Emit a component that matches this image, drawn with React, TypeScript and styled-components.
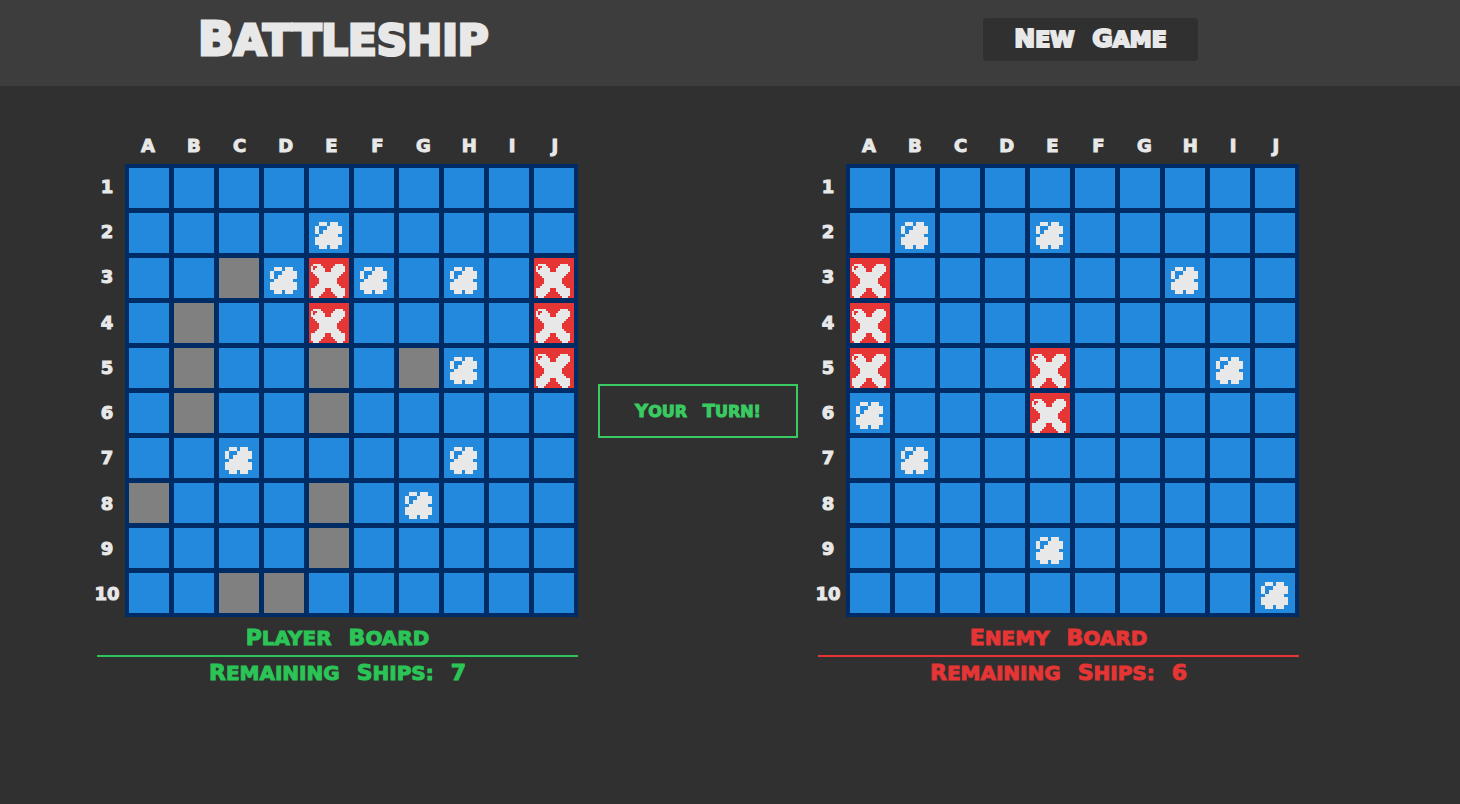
import React from "react";
import styled, { createGlobalStyle } from "styled-components";

const GlobalStyle = createGlobalStyle`
  * { box-sizing: border-box; }
  body {
    margin: 0;
    background: #303030;
    color: #e8e8e8;
    font-family: "DejaVu Sans", sans-serif;
    font-weight: 700;
  }
`;

const Header = styled.header`
  display: flex;
  align-items: center;
  justify-content: space-between;
  height: 86px;
  padding: 0 262px 7px 198px;
  background: #3d3d3d;
`;

const Title = styled.h1`
  margin: 0;
  font-size: 42px;
  line-height: 46px;
  white-space: nowrap;
  -webkit-text-stroke: 3px currentColor;
`;

const NewGame = styled.button`
  width: 215px;
  height: 43px;
  padding: 0;
  border: 0;
  border-radius: 4px;
  background: #303030;
  color: inherit;
  font: inherit;
  font-size: 22px;
  line-height: 28px;
  white-space: nowrap;
  cursor: pointer;
  -webkit-text-stroke: 2px currentColor;
`;

const Word = styled.span<{ $cap: number }>`
  display: inline-block;
  text-transform: uppercase;
  &::first-letter { font-size: ${(p) => p.$cap}px; }
  & + & { margin-left: 10px; }
`;

const Main = styled.main`
  display: flex;
  align-items: center;
  justify-content: center;
  gap: 20px;
  padding: 48px 64px 48px 0;
`;

const BoardBox = styled.section`
  display: grid;
  grid-template-columns: 28px auto;
`;

const Letters = styled.div`
  grid-column: 2;
  display: flex;
  justify-content: space-around;
  padding-bottom: 6px;
  font-size: 18px;
  line-height: 24px;
`;

const Letter = styled.span<{ $narrow: boolean }>`
  display: flex;
  justify-content: center;
  width: ${(p) => (p.$narrow ? 8 : 14)}px;
  -webkit-text-stroke: 1px currentColor;
`;

const Numbers = styled.div`
  display: flex;
  flex-direction: column;
  align-items: center;
  justify-content: space-around;
  width: 20px;
  font-size: 18px;
  line-height: 24px;
  -webkit-text-stroke: 1px currentColor;
`;

const Sea = styled.div`
  display: grid;
  grid-template-columns: repeat(10, 40px);
  grid-auto-rows: 40px;
  gap: 5px;
  padding: 4px;
  background: #002c66;
`;

const cellColors: Record<string, string> = {
  ".": "#2389dc",
  o: "#2389dc",
  s: "#808080",
  x: "#e53535",
};

const Cell = styled.div<{ $kind: string }>`
  display: flex;
  align-items: center;
  justify-content: center;
  padding: 0;
  border: 0;
  background: ${(p) => cellColors[p.$kind]};
`;

const Splash = styled.svg`
  width: 27px;
  height: 27px;
  margin-top: 5px;
  margin-right: 1px;
`;

const Hit = styled.svg`
  width: 34px;
  height: 34px;
  margin-top: 6px;
  margin-right: 2px;
`;

const Caption = styled.div<{ $color: string }>`
  grid-column: 1 / -1;
  color: ${(p) => p.$color};
  font-size: 20px;
  text-align: center;
  white-space: nowrap;
  -webkit-text-stroke: 1px currentColor;
`;

const BoardName = styled.h2`
  margin: 0;
  padding-top: 4px;
  border-bottom: 2px solid currentColor;
  font-size: 20px;
  line-height: 34px;
`;

const Remaining = styled.p`
  margin: 0;
  padding-top: 2px;
  line-height: 28px;
`;

const Turn = styled.div`
  flex: none;
  width: 200px;
  padding: 13px 0 12px;
  border: 2px solid #39cb62;
  color: #39cb62;
  font-size: 16px;
  line-height: 24px;
  text-align: center;
  white-space: nowrap;
  -webkit-text-stroke: 1px currentColor;
`;

const splashPixels = [
  ".##.##.",
  "#..####",
  "#.#####",
  ".#####.",
  "#######",
  "#######",
  ".##.##.",
];

const hitPixels = [
  ".####.......####.",
  "#..###.....######",
  "#.#####...#######",
  "#######...#######",
  ".###############.",
  "..#############..",
  "...###########...",
  "....#########....",
  "....#########....",
  "....#########....",
  "...###########...",
  "..#############..",
  "#######...#######",
  "#######...#######",
  "######.....######",
  "#####.......#####",
  ".###.........###.",
];

function Pixels({ rows }: { rows: string[] }) {
  return (
    <>
      {rows.flatMap((row, y) =>
        [...row].map((c, x) =>
          c === "#" ? <rect key={`${x}-${y}`} x={x} y={y} width="1" height="1" /> : null
        )
      )}
    </>
  );
}

function Mark({ kind }: { kind: string }) {
  if (kind === "o")
    return (
      <Splash viewBox="0 0 7 7" fill="#e8e8e8" shapeRendering="crispEdges" aria-hidden="true">
        <Pixels rows={splashPixels} />
      </Splash>
    );
  if (kind === "x")
    return (
      <Hit viewBox="0 0 17 17" fill="#e8e8e8" shapeRendering="crispEdges" aria-hidden="true">
        <Pixels rows={hitPixels} />
      </Hit>
    );
  return null;
}

function Words({ text, cap }: { text: string; cap: number }) {
  return (
    <>
      {text.split(" ").map((word, i) => (
        <React.Fragment key={i}>
          {i > 0 && " "}
          <Word $cap={cap}>{word}</Word>
        </React.Fragment>
      ))}
    </>
  );
}

interface BoardProps {
  name: string;
  color: string;
  ships: number;
  rows: string[];
  playable?: boolean;
}

function Board({ name, color, ships, rows, playable }: BoardProps) {
  return (
    <BoardBox>
      <Letters>
        {[..."ABCDEFGHIJ"].map((l) => (
          <Letter key={l} $narrow={l === "I"}>{l}</Letter>
        ))}
      </Letters>
      <Numbers>
        {rows.map((_, i) => (
          <span key={i}>{i + 1}</span>
        ))}
      </Numbers>
      <Sea>
        {rows.flatMap((row, y) =>
          [...row].map((kind, x) => (
            <Cell
              key={`${x}-${y}`}
              as={playable ? "button" : "div"}
              $kind={kind}
              aria-label={playable ? `${"ABCDEFGHIJ"[x]}${y + 1}` : undefined}
            >
              <Mark kind={kind} />
            </Cell>
          ))
        )}
      </Sea>
      <Caption $color={color}>
        <BoardName><Words text={name} cap={22} /></BoardName>
        <Remaining><Words text={`Remaining Ships: ${ships}`} cap={22} /></Remaining>
      </Caption>
    </BoardBox>
  );
}

const playerRows = [
  "..........",
  "....o.....",
  "..soxo.o.x",
  ".s..x....x",
  ".s..s.so.x",
  ".s..s.....",
  "..o....o..",
  "s...s.o...",
  "....s.....",
  "..ss......",
];

const enemyRows = [
  "..........",
  ".o..o.....",
  "x......o..",
  "x.........",
  "x...x...o.",
  "o...x.....",
  ".o........",
  "..........",
  "....o.....",
  ".........o",
];

export default function App() {
  return (
    <>
      <GlobalStyle />
      <Header>
        <Title><Words text="Battleship" cap={47} /></Title>
        <NewGame><Words text="New Game" cap={25} /></NewGame>
      </Header>
      <Main>
        <Board name="Player Board" color="#2bc456" ships={7} rows={playerRows} />
        <Turn><Words text="Your Turn!" cap={18} /></Turn>
        <Board name="Enemy Board" color="#e53535" ships={6} rows={enemyRows} playable />
      </Main>
    </>
  );
}
